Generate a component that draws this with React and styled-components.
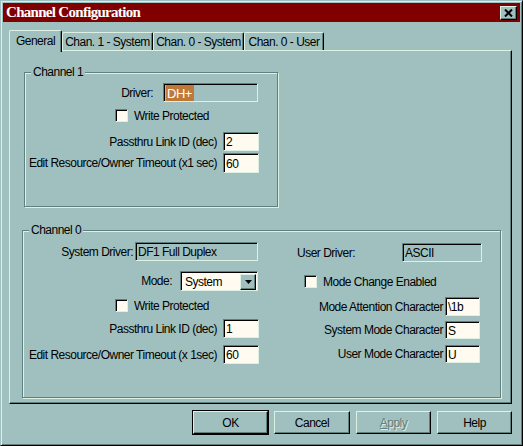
import React from "react";
import styled, { createGlobalStyle } from "styled-components";

const BG = "#a0c0c0";
const LIGHT = "#dcf0e4";
const SHADOW = "#608080";
const FIELD = "#fffbf0";

const GlobalStyle = createGlobalStyle`
  html, body {
    margin: 0;
    padding: 0;
    background: ${BG};
  }
  body {
    font-family: "Liberation Sans", Arial, sans-serif;
    font-size: 12px;
    letter-spacing: -0.5px;
    color: #000;
  }
`;

const Window = styled.div`
  box-sizing: border-box;
  width: 523px;
  height: 446px;
  background: ${BG};
  border: 1px solid ${BG};
  border-right-color: #000;
  border-bottom-color: #000;
  box-shadow: inset 1px 1px 0 ${LIGHT}, inset -1px -1px 0 ${SHADOW};
  padding: 2px;
  display: flex;
  flex-direction: column;
`;

const TitleBar = styled.div`
  height: 19px;
  background: #800000;
  display: flex;
  align-items: center;
  justify-content: space-between;
  padding: 0 3px 0 3px;
`;

const Title = styled.span`
  font-family: "Liberation Serif", "Times New Roman", serif;
  font-weight: bold;
  font-size: 15px;
  letter-spacing: -0.7px;
  color: #fff;
  line-height: 19px;
`;

const CloseButton = styled.div`
  box-sizing: border-box;
  width: 17px;
  height: 14px;
  background: ${BG};
  border: 1px solid ${LIGHT};
  border-right-color: #000;
  border-bottom-color: #000;
  box-shadow: inset -1px -1px 0 ${SHADOW};
  display: flex;
  align-items: center;
  justify-content: center;
`;

const Body = styled.div`
  flex: 1;
  display: flex;
  flex-direction: column;
  padding: 8px 8px 0 6px;
`;

const TabStrip = styled.div`
  display: flex;
  align-items: flex-end;
  height: 20px;
  position: relative;
  z-index: 1;
`;

const Tab = styled.div`
  box-sizing: border-box;
  width: ${(p) => p.$w}px;
  height: ${(p) => (p.$active ? 22 : 18)}px;
  margin-bottom: ${(p) => (p.$active ? -2 : 0)}px;
  background: ${BG};
  border-top: 1px solid ${LIGHT};
  border-left: 1px solid ${LIGHT};
  border-right: 1px solid #000;
  border-radius: 2px 2px 0 0;
  box-shadow: inset -1px 0 0 ${SHADOW};
  display: flex;
  align-items: ${(p) => (p.$active ? "flex-start" : "center")};
  justify-content: center;
  padding-top: ${(p) => (p.$active ? 3 : 0)}px;
  white-space: nowrap;
`;

const Panel = styled.div`
  box-sizing: border-box;
  width: 503px;
  height: 354px;
  border-top: 1px solid ${LIGHT};
  border-left: 1px solid ${LIGHT};
  border-right: 1px solid #000;
  border-bottom: 1px solid #000;
  box-shadow: inset -1px -1px 0 ${SHADOW};
  display: flex;
  flex-direction: column;
`;

const Group = styled.div`
  position: relative;
  box-sizing: border-box;
  width: ${(p) => p.$w}px;
  height: ${(p) => p.$h}px;
  margin: ${(p) => p.$mt}px 0 0 ${(p) => p.$ml}px;
  border: 1px solid ${SHADOW};
  box-shadow: 1px 1px 0 ${LIGHT}, inset 1px 1px 0 ${LIGHT};
  display: flex;
`;

const GroupTitle = styled.span`
  position: absolute;
  top: -8px;
  left: 6px;
  padding: 0 2px;
  background: ${BG};
  line-height: 14px;
`;

const Column = styled.div`
  display: flex;
  flex-direction: column;
  width: ${(p) => (p.$w ? `${p.$w}px` : "auto")};
  flex: ${(p) => (p.$w ? "none" : 1)};
`;

const Row = styled.div`
  display: flex;
  align-items: center;
  height: ${(p) => p.$h}px;
  margin-top: ${(p) => p.$mt}px;
  padding-left: ${(p) => p.$indent || 0}px;
`;

const Label = styled.span`
  box-sizing: border-box;
  width: ${(p) => p.$w}px;
  margin-right: ${(p) => p.$gap}px;
  text-align: ${(p) => p.$align || "right"};
  white-space: nowrap;
`;

const Field = styled.div`
  box-sizing: border-box;
  width: ${(p) => p.$w}px;
  height: 100%;
  background: ${(p) => (p.$readOnly ? BG : FIELD)};
  border: 1px solid ${LIGHT};
  border-top-color: ${SHADOW};
  border-left-color: ${SHADOW};
  box-shadow: inset 1px 1px 0 #000;
  padding: 1px 0 0 2px;
  display: flex;
  align-items: center;
  white-space: nowrap;
`;

const Selected = styled.span`
  background: #c07838;
  color: #fff;
  align-self: stretch;
  display: flex;
  align-items: center;
  padding: 0 2px 0 1px;
  margin-left: 0;
  font-size: 13px;
`;

const Box = styled.span`
  box-sizing: border-box;
  width: 13px;
  height: 13px;
  background: ${FIELD};
  border: 1px solid ${LIGHT};
  border-top-color: ${SHADOW};
  border-left-color: ${SHADOW};
  box-shadow: inset 1px 1px 0 #000;
  margin-right: 6px;
  flex: none;
`;

const Select = styled.div`
  box-sizing: border-box;
  width: ${(p) => p.$w}px;
  height: 100%;
  background: ${FIELD};
  border: 1px solid ${LIGHT};
  border-top-color: ${SHADOW};
  border-left-color: ${SHADOW};
  box-shadow: inset 1px 1px 0 #000;
  display: flex;
  align-items: center;
  justify-content: space-between;
  padding: 2px 1px 1px 4px;
`;

const ArrowButton = styled.span`
  box-sizing: border-box;
  width: 16px;
  height: 16px;
  background: ${BG};
  border: 1px solid ${LIGHT};
  border-right-color: #000;
  border-bottom-color: #000;
  box-shadow: inset -1px -1px 0 ${SHADOW};
  display: flex;
  align-items: center;
  justify-content: center;
`;

const ButtonRow = styled.div`
  display: flex;
  justify-content: flex-end;
  gap: 6px;
  margin-top: 7px;
`;

const Button = styled.div`
  box-sizing: border-box;
  width: ${(p) => p.$w || 75}px;
  height: 23px;
  background: ${BG};
  border: 1px solid ${LIGHT};
  border-right-color: #000;
  border-bottom-color: #000;
  box-shadow: ${(p) =>
    p.$default
      ? `0 0 0 1px #000, inset -1px -1px 0 ${SHADOW}`
      : `inset -1px -1px 0 ${SHADOW}`};
  display: flex;
  align-items: center;
  justify-content: center;
  color: ${(p) => (p.$disabled ? SHADOW : "#000")};
  text-shadow: ${(p) => (p.$disabled ? `1px 1px 0 ${LIGHT}` : "none")};
`;

const Check = ({ children }) => (
  <>
    <Box />
    <span>{children}</span>
  </>
);

export default function App() {
  return (
    <>
      <GlobalStyle />
      <Window>
        <TitleBar>
          <Title>Channel Configuration</Title>
          <CloseButton>
            <svg width="9" height="8" viewBox="0 0 9 8">
              <path d="M1 0.5 L8 7.5 M8 0.5 L1 7.5" stroke="#000" strokeWidth="2" />
            </svg>
          </CloseButton>
        </TitleBar>
        <Body>
          <TabStrip>
            <Tab $w={53} $active>General</Tab>
            <Tab $w={91}>Chan. 1 - System</Tab>
            <Tab $w={91}>Chan. 0 - System</Tab>
            <Tab $w={80}>Chan. 0 - User</Tab>
          </TabStrip>
          <Panel>
            <Group $w={254} $h={135} $mt={21} $ml={14}>
              <GroupTitle>Channel 1</GroupTitle>
              <Column>
                <Row $h={19} $mt={10}>
                  <Label $w={128} $gap={10}>Driver:</Label>
                  <Field $w={95} $readOnly>
                    <Selected>DH+</Selected>
                  </Field>
                </Row>
                <Row $h={13} $mt={7} $indent={90}>
                  <Check>Write Protected</Check>
                </Row>
                <Row $h={19} $mt={10}>
                  <Label $w={192} $gap={6}>Passthru Link ID (dec)</Label>
                  <Field $w={36}>2</Field>
                </Row>
                <Row $h={20} $mt={2}>
                  <Label $w={192} $gap={6}>Edit Resource/Owner Timeout (x1 sec)</Label>
                  <Field $w={36}>60</Field>
                </Row>
              </Column>
            </Group>
            <Group $w={479} $h={168} $mt={23} $ml={12}>
              <GroupTitle>Channel 0</GroupTitle>
              <Column $w={257}>
                <Row $h={19} $mt={11}>
                  <Label $w={110} $gap={2}>System Driver:</Label>
                  <Field $w={123} $readOnly>DF1 Full Duplex</Field>
                </Row>
                <Row $h={20} $mt={10}>
                  <Label $w={149} $gap={8}>Mode:</Label>
                  <Select $w={78}>
                    <span>System</span>
                    <ArrowButton>
                      <svg width="7" height="4" viewBox="0 0 7 4">
                        <path d="M0 0 H7 L3.5 4 Z" fill="#000" />
                      </svg>
                    </ArrowButton>
                  </Select>
                </Row>
                <Row $h={13} $mt={8} $indent={92}>
                  <Check>Write Protected</Check>
                </Row>
                <Row $h={19} $mt={7}>
                  <Label $w={194} $gap={6}>Passthru Link ID (dec)</Label>
                  <Field $w={36}>1</Field>
                </Row>
                <Row $h={19} $mt={7}>
                  <Label $w={194} $gap={6}>Edit Resource/Owner Timeout (x 1sec)</Label>
                  <Field $w={36}>60</Field>
                </Row>
              </Column>
              <Column>
                <Row $h={19} $mt={12} $indent={17}>
                  <Label $w={105} $gap={0} $align="left">User Driver:</Label>
                  <Field $w={80} $readOnly>ASCII</Field>
                </Row>
                <Row $h={13} $mt={13} $indent={24}>
                  <Check>Mode Change Enabled</Check>
                </Row>
                <Row $h={19} $mt={9}>
                  <Label $w={163} $gap={2}>Mode Attention Character</Label>
                  <Field $w={35}>\1b</Field>
                </Row>
                <Row $h={18} $mt={5}>
                  <Label $w={163} $gap={2}>System Mode Character</Label>
                  <Field $w={35}>S</Field>
                </Row>
                <Row $h={18} $mt={6}>
                  <Label $w={163} $gap={2}>User Mode Character</Label>
                  <Field $w={35}>U</Field>
                </Row>
              </Column>
            </Group>
          </Panel>
          <ButtonRow>
            <Button $default>OK</Button>
            <Button $w={76}>Cancel</Button>
            <Button $disabled>
              <span>
                <u>A</u>pply
              </span>
            </Button>
            <Button>Help</Button>
          </ButtonRow>
        </Body>
      </Window>
    </>
  );
}
